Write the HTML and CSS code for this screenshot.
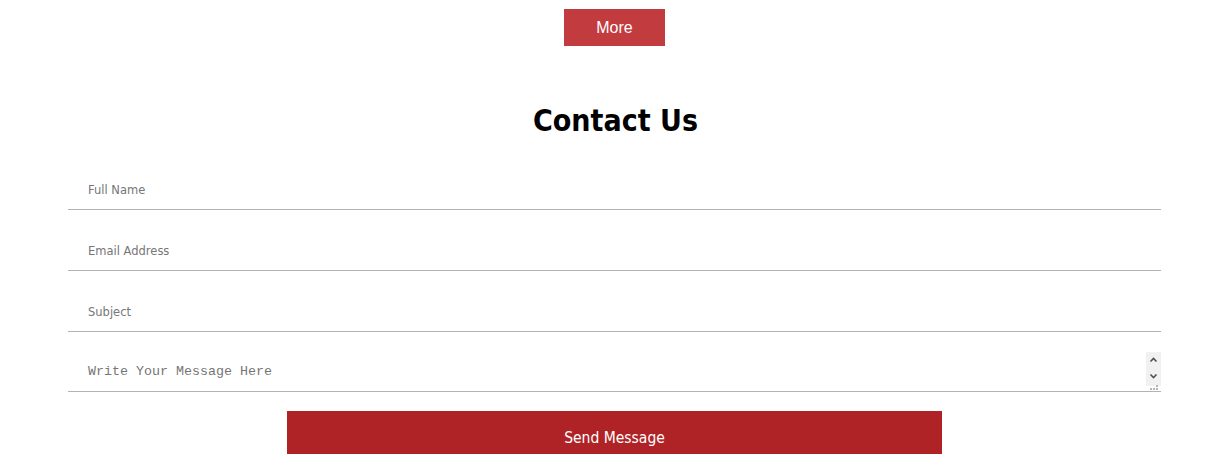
FILE: index.html
```html
<!DOCTYPE html>
<html>
<head>
<meta charset="utf-8">
<link rel="stylesheet" href="styles.css">
</head>
<body>
<div class="more-wrap">
  <button class="more-btn" type="button">More</button>
</div>
<section class="contact">
  <h2 class="contact-title">Contact Us</h2>
  <form class="contact-form">
    <input class="field" type="text" placeholder="Full Name">
    <input class="field" type="email" placeholder="Email Address">
    <input class="field" type="text" placeholder="Subject">
    <div class="message-wrap">
      <textarea class="field message" placeholder="Write Your Message Here"></textarea>
      <div class="fake-scroll">
        <svg width="15" height="34" viewBox="0 0 15 34">
          <rect x="0" y="0" width="15" height="34" fill="#f1f1f1"/>
          <path d="M4.5 9.5 L7.5 6.5 L10.5 9.5" fill="none" stroke="#505050" stroke-width="1.6"/>
          <path d="M4.5 22.5 L7.5 25.5 L10.5 22.5" fill="none" stroke="#505050" stroke-width="1.6"/>
        </svg>
      </div>
      <div class="resizer">
        <svg width="10" height="6" viewBox="0 0 10 6">
          <rect x="7" y="0" width="2" height="2" fill="#b5b5b5"/>
          <rect x="4" y="3" width="2" height="2" fill="#b5b5b5"/>
          <rect x="7" y="3" width="2" height="2" fill="#b5b5b5"/>
          <rect x="1" y="3" width="2" height="2" fill="#b5b5b5"/>
        </svg>
      </div>
    </div>
    <button class="send-btn" type="button">Send Message</button>
  </form>
</section>
</body>
</html>
```
FILE: styles.css
```css
html, body {
  margin: 0;
  padding: 0;
  background: #ffffff;
  overflow: hidden;
}
body {
  font-family: "DejaVu Sans", Tahoma, sans-serif;
}
.more-wrap {
  display: flex;
  justify-content: center;
  padding-top: 9px;
}
.more-btn {
  width: 101px;
  height: 37px;
  border: none;
  background: #c23b3e;
  color: #ffffff;
  font-family: "Liberation Sans", Arial, sans-serif;
  font-size: 16px;
  padding: 0;
  margin-left: 8px;
}
.contact {
  display: flex;
  flex-direction: column;
  align-items: center;
}
.contact-title {
  margin: 57px 0 0 10px;
  font-family: "DejaVu Sans Condensed", "DejaVu Sans", Tahoma, sans-serif;
  font-weight: bold;
  font-size: 30px;
  line-height: 36px;
  color: #000;
}
.contact-form {
  width: 1093px;
  margin-left: 8px;
  margin-top: 30px;
  display: flex;
  flex-direction: column;
  gap: 20px;
}
.field {
  box-sizing: border-box;
  height: 41px;
  border: none;
  border-bottom: 1px solid #b3b3b3;
  padding: 2px 20px 0 20px;
  font-family: "DejaVu Sans", Tahoma, sans-serif;
  font-size: 11.5px;
  color: #333;
  outline: none;
  background: transparent;
}
.field::placeholder {
  color: #767676;
}
.message-wrap {
  position: relative;
  display: flex;
  flex-direction: column;
  margin-top: -1px;
}
.message {
  font-family: "Liberation Mono", "Courier New", monospace;
  font-size: 13.33px;
  padding: 13px 20px 0 20px;
  resize: none;
  overflow: hidden;
}
.fake-scroll {
  position: absolute;
  right: 0;
  top: 1px;
  width: 15px;
  height: 34px;
  line-height: 0;
}
.resizer {
  position: absolute;
  right: 2px;
  top: 34px;
  line-height: 0;
}
.send-btn {
  align-self: center;
  width: 655px;
  height: 54px;
  margin-top: -1px;
  border: none;
  background: #af2326;
  color: #ffffff;
  font-family: "DejaVu Sans Condensed", "DejaVu Sans", Tahoma, sans-serif;
  font-size: 15.5px;
  padding: 0;
}
```
